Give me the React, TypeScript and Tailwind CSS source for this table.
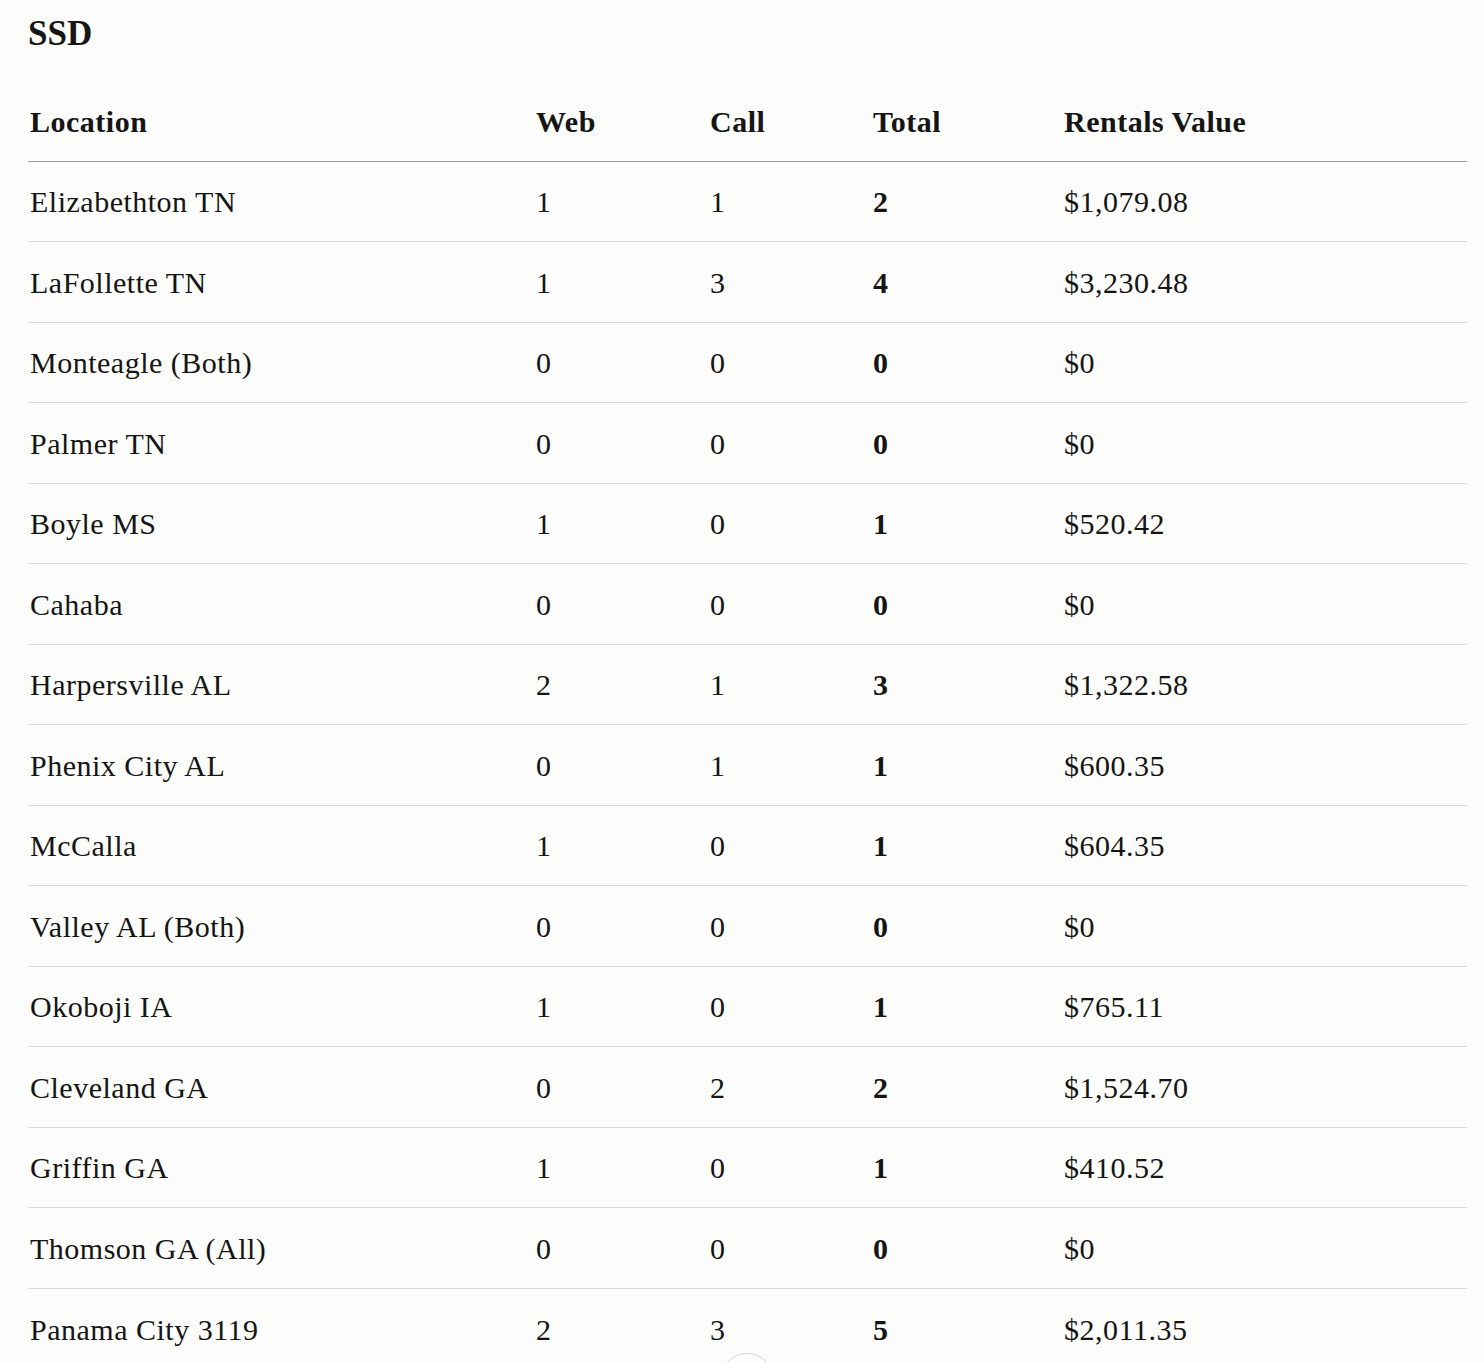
import React from "react";

const rows: [string, number, number, number, string][] = [
  ["Elizabethton TN", 1, 1, 2, "$1,079.08"],
  ["LaFollette TN", 1, 3, 4, "$3,230.48"],
  ["Monteagle (Both)", 0, 0, 0, "$0"],
  ["Palmer TN", 0, 0, 0, "$0"],
  ["Boyle MS", 1, 0, 1, "$520.42"],
  ["Cahaba", 0, 0, 0, "$0"],
  ["Harpersville AL", 2, 1, 3, "$1,322.58"],
  ["Phenix City AL", 0, 1, 1, "$600.35"],
  ["McCalla", 1, 0, 1, "$604.35"],
  ["Valley AL (Both)", 0, 0, 0, "$0"],
  ["Okoboji IA", 1, 0, 1, "$765.11"],
  ["Cleveland GA", 0, 2, 2, "$1,524.70"],
  ["Griffin GA", 1, 0, 1, "$410.52"],
  ["Thomson GA (All)", 0, 0, 0, "$0"],
  ["Panama City 3119", 2, 3, 5, "$2,011.35"],
];

export default function App() {
  return (
    <div
      className="relative h-[1362px] overflow-hidden bg-[#fcfcfa] pl-[28px] pr-[17px] text-[#151515]"
      style={{ fontFamily: '"Liberation Serif", "DejaVu Serif", serif' }}
    >
      <h1 className="pt-[14px] text-[35px] font-bold leading-[40px]">SSD</h1>
      <table className="mt-[27px] w-full table-fixed border-collapse text-[30px] tracking-[0.5px]">
        <colgroup>
          <col className="w-[506px]" />
          <col className="w-[174px]" />
          <col className="w-[163px]" />
          <col className="w-[191px]" />
          <col />
        </colgroup>
        <thead>
          <tr className="h-[80px] border-b-[1.5px] border-[#9a9a9a]">
            {["Location", "Web", "Call", "Total", "Rentals Value"].map((h) => (
              <th key={h} className="pl-[2px] pt-[2px] text-left align-middle font-bold leading-[34px]">
                {h}
              </th>
            ))}
          </tr>
        </thead>
        <tbody>
          {rows.map((r, i) => (
            <tr key={r[0]} className={`h-[80.5px] ${i < rows.length - 1 ? "border-b border-[#d9d9d7]" : ""}`}>
              <td className="pl-[2px] pt-[2px] leading-[34px]">{r[0]}</td>
              <td className="pl-[2px] pt-[2px] leading-[34px]">{r[1]}</td>
              <td className="pl-[2px] pt-[2px] leading-[34px]">{r[2]}</td>
              <td className="pl-[2px] pt-[2px] font-bold leading-[34px]">{r[3]}</td>
              <td className="pl-[2px] pt-[2px] leading-[34px]">{r[4]}</td>
            </tr>
          ))}
        </tbody>
      </table>
      <div className="absolute left-[720px] top-[1353px] h-[54px] w-[54px] rounded-full border border-[#d6d6d6] bg-[#fcfcfa]" />
    </div>
  );
}
